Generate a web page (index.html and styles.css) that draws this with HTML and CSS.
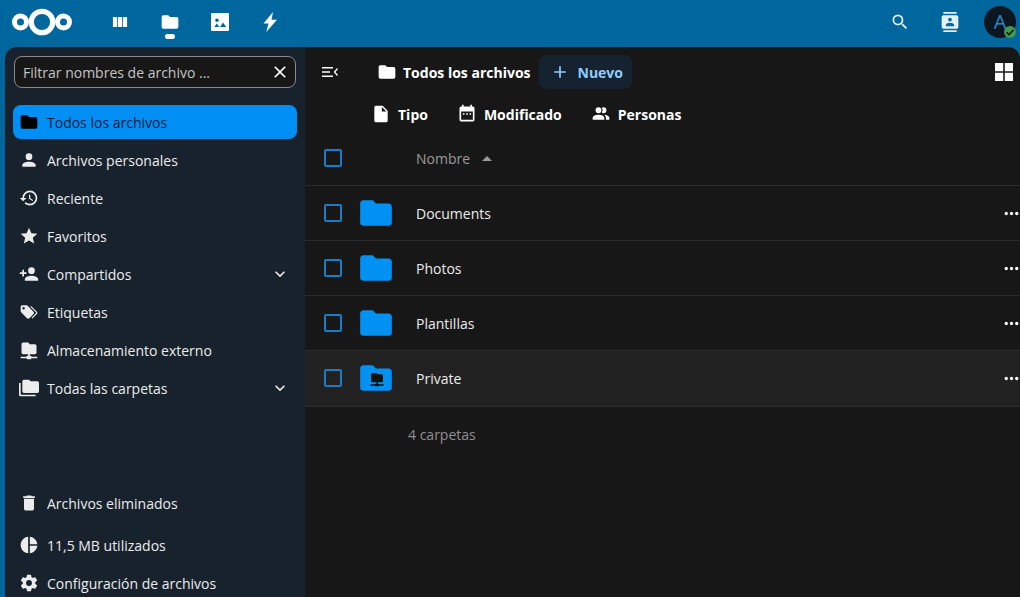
FILE: index.html
```html
<!DOCTYPE html>
<html lang="es">
<head>
    <meta charset="UTF-8">
    <title>Archivos</title>
    <link rel="stylesheet" href="styles.css">
</head>
<body>
<svg class="sprite" xmlns="http://www.w3.org/2000/svg">
    <symbol id="i-folder" viewBox="0 0 24 24"><path d="M10,4H4C2.89,4 2,4.89 2,6V18A2,2 0 0,0 4,20H20A2,2 0 0,0 22,18V8C22,6.89 21.1,6 20,6H12L10,4Z"/></symbol>
    <symbol id="i-account" viewBox="0 0 24 24"><path d="M12,4A4,4 0 0,1 16,8A4,4 0 0,1 12,12A4,4 0 0,1 8,8A4,4 0 0,1 12,4M12,14C16.42,14 20,15.79 20,18V20H4V18C4,15.79 7.58,14 12,14Z"/></symbol>
    <symbol id="i-history" viewBox="0 0 24 24"><path d="M13.5,8H12V13L16.28,15.54L17,14.33L13.5,12.25V8M13,3A9,9 0 0,0 4,12H1L4.96,16.03L9,12H6A7,7 0 0,1 13,5A7,7 0 0,1 20,12A7,7 0 0,1 13,19C11.07,19 9.32,18.21 8.06,16.94L6.64,18.36C8.27,20 10.5,21 13,21A9,9 0 0,0 22,12A9,9 0 0,0 13,3"/></symbol>
    <symbol id="i-star" viewBox="0 0 24 24"><path d="M12,17.27L18.18,21L16.54,13.97L22,9.24L14.81,8.62L12,2L9.19,8.62L2,9.24L7.45,13.97L5.82,21L12,17.27Z"/></symbol>
    <symbol id="i-share" viewBox="0 0 24 24"><path d="M15,14C12.33,14 7,15.33 7,18V20H23V18C23,15.33 17.67,14 15,14M6,10V7H4V10H1V12H4V15H6V12H9V10M15,12A4,4 0 0,0 19,8A4,4 0 0,0 15,4A4,4 0 0,0 11,8A4,4 0 0,0 15,12Z"/></symbol>
    <symbol id="i-tags" viewBox="0 0 24 24"><path d="M5.5,9A1.5,1.5 0 0,0 7,7.5A1.5,1.5 0 0,0 5.5,6A1.5,1.5 0 0,0 4,7.5A1.5,1.5 0 0,0 5.5,9M17.41,11.58C17.77,11.94 18,12.44 18,13C18,13.55 17.78,14.05 17.41,14.41L12.41,19.41C12.05,19.77 11.55,20 11,20C10.45,20 9.95,19.78 9.58,19.41L2.59,12.42C2.22,12.05 2,11.55 2,11V6C2,4.89 2.89,4 4,4H9C9.55,4 10.05,4.22 10.41,4.58L17.41,11.58M13.54,5.71L14.54,4.71L21.41,11.58C21.78,11.94 22,12.45 22,13C22,13.55 21.78,14.05 21.42,14.41L16.04,19.79L15.04,18.79L20.75,13L13.54,5.71Z"/></symbol>
    <symbol id="i-network" viewBox="0 0 24 24"><path d="M3,15V5A2,2 0 0,1 5,3H11L13,5H19A2,2 0 0,1 21,7V15A2,2 0 0,1 19,17H13V19H14A1,1 0 0,1 15,20H22V22H15A1,1 0 0,1 14,23H10A1,1 0 0,1 9,22H2V20H9A1,1 0 0,1 10,19H11V17H5A2,2 0 0,1 3,15Z"/></symbol>
    <symbol id="i-folders" viewBox="0 0 24 24"><path d="M22,4H14L12,2H6A2,2 0 0,0 4,4V16A2,2 0 0,0 6,18H22A2,2 0 0,0 24,16V6A2,2 0 0,0 22,4M2,6H0V20A2,2 0 0,0 2,22H20V20H2V6Z"/></symbol>
    <symbol id="i-delete" viewBox="0 0 24 24"><path d="M19,4H15.5L14.5,3H9.5L8.5,4H5V6H19M6,19A2,2 0 0,0 8,21H16A2,2 0 0,0 18,19V7H6V19Z"/></symbol>
    <symbol id="i-pie" viewBox="0 0 24 24"><path d="M11,2V22C5.9,21.5 2,17.2 2,12C2,6.8 5.9,2.5 11,2M13,2V11H22C21.5,6.2 17.8,2.5 13,2M13,13V22C17.7,21.5 21.5,17.8 22,13H13Z"/></symbol>
    <symbol id="i-cog" viewBox="0 0 24 24"><path d="M12,15.5A3.5,3.5 0 0,1 8.5,12A3.5,3.5 0 0,1 12,8.5A3.5,3.5 0 0,1 15.5,12A3.5,3.5 0 0,1 12,15.5M19.43,12.97C19.47,12.65 19.5,12.33 19.5,12C19.5,11.67 19.47,11.34 19.43,11L21.54,9.37C21.73,9.22 21.78,8.95 21.66,8.73L19.66,5.27C19.54,5.05 19.27,4.96 19.05,5.05L16.56,6.05C16.04,5.66 15.5,5.32 14.87,5.07L14.5,2.42C14.46,2.18 14.25,2 14,2H10C9.75,2 9.54,2.18 9.5,2.42L9.13,5.07C8.5,5.32 7.96,5.66 7.44,6.05L4.95,5.05C4.73,4.96 4.46,5.05 4.34,5.27L2.34,8.73C2.21,8.95 2.27,9.22 2.46,9.37L4.57,11C4.53,11.34 4.5,11.67 4.5,12C4.5,12.33 4.53,12.65 4.57,12.97L2.46,14.63C2.27,14.78 2.21,15.05 2.34,15.27L4.34,18.73C4.46,18.95 4.73,19.03 4.95,18.95L7.44,17.94C7.96,18.34 8.5,18.68 9.13,18.93L9.5,21.58C9.54,21.82 9.75,22 10,22H14C14.25,22 14.46,21.82 14.5,21.58L14.87,18.93C15.5,18.67 16.04,18.34 16.56,17.94L19.05,18.95C19.27,19.03 19.54,18.95 19.66,18.73L21.66,15.27C21.78,15.05 21.73,14.78 21.54,14.63L19.43,12.97Z"/></symbol>
    <symbol id="i-chevron" viewBox="0 0 24 24"><path d="M7.41,8.58L12,13.17L16.59,8.58L18,10L12,16L6,10L7.41,8.58Z"/></symbol>
    <symbol id="i-dots" viewBox="0 0 24 24"><circle cx="6" cy="12" r="1.9"/><circle cx="12" cy="12" r="1.9"/><circle cx="18" cy="12" r="1.9"/></symbol>
</svg>

<header class="topbar">
    <svg class="logo" viewBox="0 0 60 30" stroke="#fff">
        <circle cx="8.500" cy="15" r="6" stroke-width="5"/>
        <circle cx="30" cy="15" r="10.700" stroke-width="5.200"/>
        <circle cx="51.500" cy="15" r="6" stroke-width="5"/>
    </svg>
    <nav class="apps">
        <a class="app">
            <svg viewBox="0 0 20 20"><path d="M3.500 5h3a.6.6 0 0 1 .6.6v8.800a.6.6 0 0 1-.6.6h-3a.6.6 0 0 1-.6-.6V5.600a.6.6 0 0 1 .6-.6zM8.500 5h3a.6.6 0 0 1 .6.6v8.800a.6.6 0 0 1-.6.6h-3a.6.6 0 0 1-.6-.6V5.600a.6.6 0 0 1 .6-.6zM13.500 5h3a.6.6 0 0 1 .6.6v8.800a.6.6 0 0 1-.6.6h-3a.6.6 0 0 1-.6-.6V5.600a.6.6 0 0 1 .6-.6z"/></svg>
        </a>
        <a class="app active">
            <svg><use href="#i-folder"/></svg>
        </a>
        <a class="app">
            <svg viewBox="0 0 20 20"><path fill-rule="evenodd" d="M2 1h16a1 1 0 0 1 1 1v16a1 1 0 0 1-1 1H2a1 1 0 0 1-1-1V2a1 1 0 0 1 1-1zM7 6.500a1.800 1.800 0 1 0 0 3.600 1.800 1.800 0 0 0 0-3.600zM6.800 11.500l-2.500 3.500h5zM13 10.500l-3 4.500h6.200z"/></svg>
        </a>
        <a class="app">
            <svg viewBox="0 0 20 20"><path d="M13 0 3.500 11.500h5L6.300 20 17 7.800h-5.500z"/></svg>
        </a>
    </nav>
    <div class="top-actions">
        <svg class="top-icon" viewBox="0 0 24 24"><path d="M9.500,3A6.500,6.500 0 0,1 16,9.500C16,11.110 15.410,12.590 14.440,13.730L14.710,14H15.500L20.500,19L19,20.500L14,15.500V14.710L13.730,14.440C12.590,15.410 11.110,16 9.500,16A6.500,6.500 0 0,1 3,9.500A6.500,6.500 0 0,1 9.500,3M9.500,5C7,5 5,7 5,9.500C5,12 7,14 9.500,14C12,14 14,12 14,9.500C14,7 12,5 9.500,5Z"/></svg>
        <svg class="top-icon contacts" viewBox="0 0 24 24"><path d="M20,0H4V2H20V0M4,24H20V22H4V24M20,4H4A2,2 0 0,0 2,6V18A2,2 0 0,0 4,20H20A2,2 0 0,0 22,18V6A2,2 0 0,0 20,4M12,6.750A2.250,2.250 0 0,1 14.250,9A2.250,2.250 0 0,1 12,11.250A2.250,2.250 0 0,1 9.750,9A2.250,2.250 0 0,1 12,6.750M17,17H7V15.500C7,13.830 10.330,13 12,13C13.670,13 17,13.830 17,15.500V17Z"/></svg>
        <div class="avatar">A
            <span class="status">
                <svg viewBox="0 0 12 12"><path d="M2.500 6.200 5 8.700 9.500 3.800" fill="none" stroke="#0f1a14" stroke-width="1.600"/></svg>
            </span>
        </div>
    </div>
</header>

<div class="content">
    <aside class="sidebar">
        <div class="filter">
            <span>Filtrar nombres de archivo ...</span>
            <svg class="filter-close" viewBox="0 0 24 24"><path d="M19,6.410L17.590,5L12,10.590L6.410,5L5,6.410L10.590,12L5,17.590L6.410,19L12,13.410L17.590,19L19,17.590L13.410,12L19,6.410Z"/></svg>
        </div>
        <ul class="nav-list">
            <li class="nav-item active"><svg class="icon"><use href="#i-folder"/></svg>Todos los archivos</li>
            <li class="nav-item"><svg class="icon"><use href="#i-account"/></svg>Archivos personales</li>
            <li class="nav-item"><svg class="icon"><use href="#i-history"/></svg>Reciente</li>
            <li class="nav-item"><svg class="icon"><use href="#i-star"/></svg>Favoritos</li>
            <li class="nav-item"><svg class="icon"><use href="#i-share"/></svg>Compartidos<svg class="chevron"><use href="#i-chevron"/></svg></li>
            <li class="nav-item"><svg class="icon"><use href="#i-tags"/></svg>Etiquetas</li>
            <li class="nav-item"><svg class="icon"><use href="#i-network"/></svg>Almacenamiento externo</li>
            <li class="nav-item"><svg class="icon"><use href="#i-folders"/></svg>Todas las carpetas<svg class="chevron"><use href="#i-chevron"/></svg></li>
        </ul>
        <ul class="nav-list nav-bottom">
            <li class="nav-item trash"><svg class="icon"><use href="#i-delete"/></svg>Archivos eliminados</li>
            <li class="nav-item quota"><svg class="icon"><use href="#i-pie"/></svg>11,5 MB utilizados</li>
            <li class="nav-item last"><svg class="icon"><use href="#i-cog"/></svg>Configuración de archivos</li>
        </ul>
    </aside>

    <main class="files">
        <div class="toolbar">
            <svg class="toggle" viewBox="0 0 16 12"><path d="M0 1h11v1.500H0zM0 5.200h8v1.500H0zM0 9.500h11V11H0z"/><path d="M15.500 2.500 12.500 6l3 3.500" fill="none" stroke="#fff" stroke-width="1.300"/></svg>
            <div class="crumb"><svg class="icon"><use href="#i-folder"/></svg>Todos los archivos</div>
            <button class="btn-new">
                <svg viewBox="0 0 24 24"><path d="M19,13H13V19H11V13H5V11H11V5H13V11H19V13Z"/></svg>Nuevo
            </button>
            <svg class="grid-view" viewBox="0 0 18 18"><path d="M0 0h8.200v8.200H0zM9.800 0H18v8.200H9.800zM0 9.800h8.200V18H0zM9.800 9.800H18V18H9.800z"/></svg>
        </div>
        <div class="filters">
            <div class="chip"><svg viewBox="0 0 24 24"><path d="M13,9V3.500L18.500,9M6,2C4.890,2 4,2.890 4,4V20A2,2 0 0,0 6,22H18A2,2 0 0,0 20,20V8L14,2H6Z"/></svg>Tipo</div>
            <div class="chip"><svg viewBox="0 0 24 24"><path fill-rule="evenodd" d="M7 11h2v2H7zM11 11h2v2h-2zM15 11h2v2h-2zM5 3h1V1h2v2h8V1h2v2h1a2 2 0 0 1 2 2v14a2 2 0 0 1-2 2H5a2 2 0 0 1-2-2V5a2 2 0 0 1 2-2zM5 19h14V9H5z"/></svg>Modificado</div>
            <div class="chip"><svg viewBox="0 0 24 24"><path d="M16 17V19H2V17S2 13 9 13 16 17 16 17M12.500 7.500A3.500 3.500 0 1 0 9 11A3.500 3.500 0 0 0 12.500 7.500M15.940 13A5.320 5.320 0 0 1 18 17V19H22V17S22 13.370 15.940 13M15 4A3.390 3.390 0 0 0 13.070 4.590A5 5 0 0 1 13.070 10.410A3.390 3.390 0 0 0 15 11A3.500 3.500 0 0 0 15 4Z"/></svg>Personas</div>
        </div>
        <div class="file-head">
            <span class="check"></span>
            <span class="head-name">Nombre</span>
            <span class="sort"></span>
        </div>
        <div class="file-row">
            <span class="check"></span>
            <svg class="folder"><use href="#i-folder"/></svg>
            <span class="file-name">Documents</span>
            <svg class="dots"><use href="#i-dots"/></svg>
        </div>
        <div class="file-row">
            <span class="check"></span>
            <svg class="folder"><use href="#i-folder"/></svg>
            <span class="file-name">Photos</span>
            <svg class="dots"><use href="#i-dots"/></svg>
        </div>
        <div class="file-row">
            <span class="check"></span>
            <svg class="folder"><use href="#i-folder"/></svg>
            <span class="file-name">Plantillas</span>
            <svg class="dots"><use href="#i-dots"/></svg>
        </div>
        <div class="file-row hover">
            <span class="check"></span>
            <span class="folder-wrap">
                <svg class="folder"><use href="#i-folder"/></svg>
                <svg class="overlay" viewBox="0 0 24 24"><use href="#i-network"/></svg>
            </span>
            <span class="file-name">Private</span>
            <svg class="dots"><use href="#i-dots"/></svg>
        </div>
        <div class="file-summary">4 carpetas</div>
    </main>
</div>
</body>
</html>
```

FILE: styles.css
```css
* {
    box-sizing: border-box;
}
html, body {
    height: 100%;
}
body {
    margin: 0;
    overflow: hidden;
    background: #00679e;
    color: #fff;
    font-family: "Open Sans", "Noto Sans", sans-serif;
    font-size: 14px;
}
svg {
    fill: currentColor;
    display: block;
}
.sprite {
    display: none;
}

/* top bar */
.topbar {
    height: 47px;
    display: flex;
    align-items: center;
    padding: 0 4px 3px 12px;
}
.logo {
    width: 60px;
    height: 30px;
    fill: none;
}
.apps {
    display: flex;
    margin-left: 23px;
}
.app {
    position: relative;
    width: 50px;
    height: 44px;
    display: flex;
    align-items: center;
    justify-content: center;
}
.app svg {
    width: 20px;
    height: 20px;
}
.app.active::after {
    content: "";
    position: absolute;
    left: 20px;
    bottom: 5px;
    width: 10px;
    height: 5px;
    border-radius: 3px;
    background: #fff;
}
.top-actions {
    margin-left: auto;
    display: flex;
    align-items: center;
}
.top-icon {
    width: 20px;
    height: 20px;
    color: #e3f0f8;
}
.top-icon.contacts {
    margin-left: 30px;
}
.avatar {
    position: relative;
    width: 32px;
    height: 32px;
    margin-left: 24px;
    border-radius: 50%;
    background: #0b1620;
    color: #2f86c9;
    font-size: 20px;
    line-height: 32px;
    text-align: center;
}
.status {
    position: absolute;
    right: 0;
    bottom: 0;
    width: 12px;
    height: 12px;
    border-radius: 50%;
    background: #43994f;
}

/* layout */
.content {
    display: flex;
    height: 553px;
    padding-left: 5px;
}
.sidebar {
    width: 300px;
    flex-shrink: 0;
    display: flex;
    flex-direction: column;
    padding: 9px 8px 0;
    background: #17222c;
    border-radius: 12px 0 0 0;
}
.filter {
    height: 32px;
    display: flex;
    align-items: center;
    justify-content: space-between;
    margin: 0 1px 17px;
    padding: 0 8px;
    background: #171717;
    border: 1px solid #8a8a8a;
    border-radius: 8px;
    color: #c4c4c4;
}
.filter-close {
    width: 20px;
    height: 20px;
    margin-right: -3px;
    color: #fff;
}
.nav-list {
    list-style: none;
    margin: 0;
    padding: 0;
}
.nav-bottom {
    margin-top: auto;
}
.nav-item {
    height: 34px;
    margin-bottom: 4px;
    display: flex;
    align-items: center;
    border-radius: 8px;
    padding-left: 6px;
    color: #ececec;
}
.nav-item.active {
    background: #008ff5;
    color: #00183a;
}
.nav-item.trash {
    margin-bottom: 8px;
}
.nav-item.last {
    margin-bottom: 0;
}
.nav-item .icon {
    width: 20px;
    height: 20px;
    margin-right: 8px;
    flex-shrink: 0;
}
.nav-item.active .icon {
    color: #000;
}
.chevron {
    width: 20px;
    height: 20px;
    margin-left: auto;
    margin-right: 7px;
}

/* files */
.files {
    flex: 1;
    background: #171717;
    border-radius: 0 12px 0 0;
}
.toolbar {
    height: 50px;
    display: flex;
    align-items: center;
    padding: 0 7px 0 17px;
}
.toggle {
    width: 16px;
    height: 12px;
    margin-right: 39px;
}
.crumb {
    display: flex;
    align-items: center;
    font-weight: 700;
}
.crumb .icon {
    width: 20px;
    height: 20px;
    margin-right: 6px;
}
.btn-new {
    height: 34px;
    margin-left: 8px;
    display: flex;
    align-items: center;
    padding: 0 9px 0 11px;
    background: #14232f;
    border: 0;
    border-radius: 8px;
    color: #8fcdff;
    font: inherit;
    font-weight: 700;
}
.btn-new svg {
    width: 20px;
    height: 20px;
    margin-right: 8px;
}
.grid-view {
    width: 18px;
    height: 18px;
    margin-left: auto;
}
.filters {
    height: 34px;
    display: flex;
    gap: 29px;
    padding-left: 66px;
}
.chip {
    display: flex;
    align-items: center;
    font-weight: 700;
}
.chip svg {
    width: 20px;
    height: 20px;
    margin-right: 7px;
}
.file-head {
    height: 55px;
    display: flex;
    align-items: center;
    padding-left: 19px;
    border-bottom: 1px solid #2c2c2c;
    color: #9a9a9a;
}
.check {
    width: 18px;
    height: 18px;
    flex-shrink: 0;
    border: 2px solid #1a7cc4;
    border-radius: 2px;
}
.head-name {
    margin-left: 74px;
}
.sort {
    margin-left: 12px;
    border: 5px solid transparent;
    border-top: 0;
    border-bottom: 5px solid #9a9a9a;
}
.file-row {
    height: 55px;
    display: flex;
    align-items: center;
    padding-left: 19px;
    border-bottom: 1px solid #2c2c2c;
}
.file-row.hover {
    background: #212121;
    height: 56px;
    padding-bottom: 1px;
}
.folder {
    width: 38px;
    height: 38px;
    margin-left: 15px;
    color: #0091f2;
    flex-shrink: 0;
}
.folder-wrap {
    position: relative;
    flex-shrink: 0;
}
.overlay {
    position: absolute;
    left: 27px;
    top: 12px;
    width: 16px;
    height: 16px;
    color: #111;
}
.file-name {
    margin-left: 21px;
    color: #ececec;
}
.dots {
    width: 21px;
    height: 21px;
    margin-left: auto;
    margin-right: -2px;
    color: #fff;
}
.file-summary {
    height: 54px;
    display: flex;
    align-items: center;
    padding-left: 103px;
    color: #8f8f8f;
}
```
